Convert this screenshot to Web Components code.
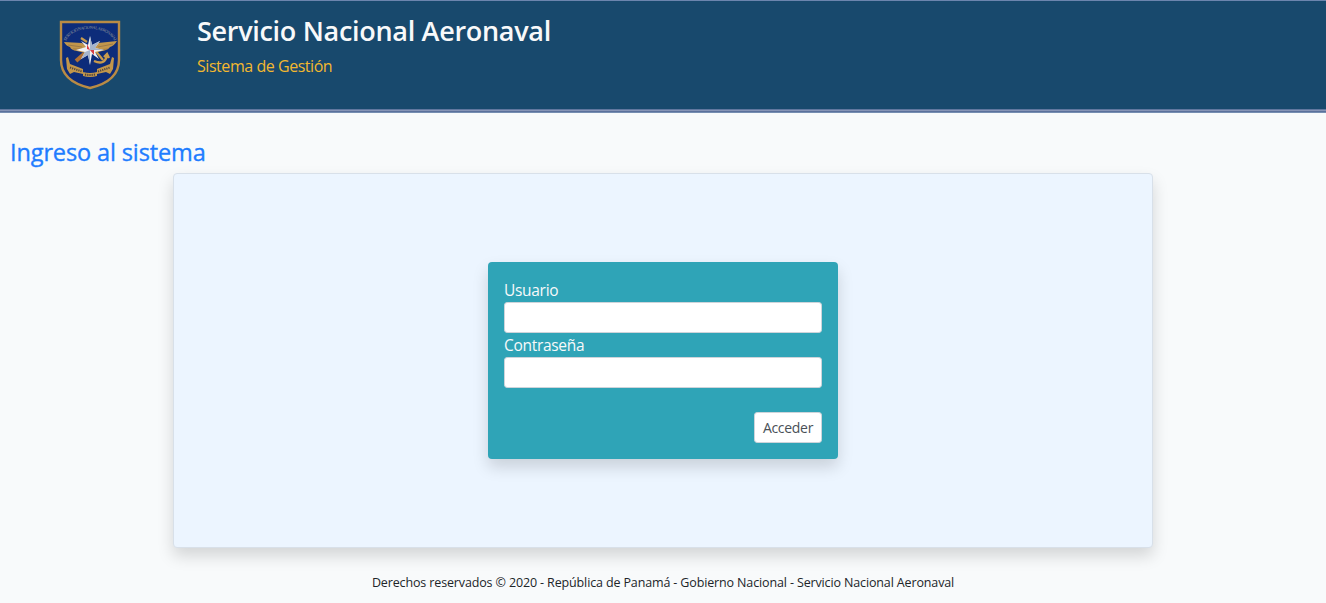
<!DOCTYPE html>
<html lang="es">
<head>
<meta charset="utf-8">
<title>Servicio Nacional Aeronaval</title>
<style>
html,body{margin:0;height:100%;overflow:hidden}
body{background:#f8fafb;font-family:"Open Sans","Noto Sans",sans-serif;color:#212529}
</style>
</head>
<body>
<sena-app></sena-app>
<script>
const define = (name, html) => customElements.define(name, class extends HTMLElement {
  constructor() {
    super();
    this.attachShadow({ mode: 'open' }).innerHTML = html;
  }
});

define('sena-crest', `
<style>:host{display:block;width:62px;height:71px}svg{display:block}</style>
<svg width="62" height="71" viewBox="0 0 62 71" role="img" aria-label="Escudo">
  <defs><path id="arc" d="M7 22C13 6 48 5 56 23"/></defs>
  <path d="M2 3H60V41C60 57 48 65 31 69C14 65 2 57 2 41Z" fill="#0d2c7a" stroke="#b98b45" stroke-width="2.4"/>
  <text font-family="Liberation Serif, serif" font-size="4.2" fill="#969b9c"><textPath href="#arc" textLength="58">SERVICIO NACIONAL AERONAVAL</textPath></text>
  <path d="M5 23L23 24L31 29L39 24L58 22Q55 27 51 28Q49 31 43 32L36 34L31 32L26 34L18 32Q12 31 11 28Q7 27 5 23Z" fill="#c2964b"/>
  <path d="M9 26L23 28M14 30L25 30M54 25L39 28M49 30L37 31" stroke="#856846" stroke-width=".6"/>
  <path d="M22 19L28 23M35 30L44 41M28 32L20 40" stroke="#c99b4c" stroke-width="2.2"/>
  <path d="M17 42L25 35" stroke="#b07034" stroke-width="4"/>
  <path d="M35 42Q46 47 48 36M45 38L48 35L50 39" fill="none" stroke="#c99b4c" stroke-width="2.4"/>
  <path d="M31 17L33 26L41 22L36 29L45 31L36 33L40 40L33 35L31 46L29 36L22 40L26 33L17 31L27 28L22 22L29 26Z" fill="#f0f1f5"/>
  <path d="M31 17V31H45L36 29L41 22L33 26ZM31 31V46L29 36L22 40L26 33Z" fill="#a6b5cc"/>
  <path d="M31 31L28 25V30ZM31 31L35 36V31Z" fill="#d83f46"/>
  <path d="M7 39L9 38L11 45L24 50V55L15 53L11 55L8 50ZM55 39L53 38L51 45L38 50V55L47 53L51 55L54 50ZM24 53Q31 55 38 53V57Q31 59 24 57Z" fill="#c2964b"/>
  <path d="M11 48.5L23 52.5M26 55.5Q31 56.5 36 55.5M39 52.5L51 48.5" fill="none" stroke="#4d4542" stroke-width="2" stroke-dasharray="1.2 1"/>
</svg>`);

define('sena-header', `
<style>
:host{display:flex;align-items:flex-start;box-sizing:border-box;height:113px;background:linear-gradient(#6c85ae 0 1px,#18496d 1px 109px,#60779f 109px 110px,#8694b6 110px 111px,#5b719b 111px 112px,#768db1 112px 113px);padding:19px 0 0 59px}
.text{margin-left:76px;margin-top:-5px}
::slotted([slot=title]){display:block;font-size:27px;line-height:34px;font-weight:600;color:#f8f9fa;white-space:nowrap;letter-spacing:-.3px}
::slotted([slot=subtitle]){display:block;margin-top:6px;font-size:16px;line-height:24px;color:#f3b82f;white-space:nowrap;letter-spacing:-.45px}
</style>
<sena-crest></sena-crest><div class="text"><slot name="title"></slot><slot name="subtitle"></slot></div>`);

define('sena-card', `
<style>
:host{display:flex;box-sizing:border-box;width:980px;height:375px;margin:0 auto;border:1px solid #d8e0e9;border-radius:4px;background:#ecf5ff;box-shadow:0 8px 16px rgba(0,0,0,.15);align-items:center;justify-content:center}
</style><slot></slot>`);

define('sena-field', `
<style>
:host{display:block;height:55px}
label{display:block;font-size:15.5px;line-height:24px;color:#f8f9fa;letter-spacing:-.3px}
input{display:block;box-sizing:border-box;width:100%;height:31px;border:1px solid #ced4da;border-radius:3.2px;background:#fff;padding:4px 8px;outline:0}
</style><label><slot></slot></label><input>`);

define('sena-login', `
<style>
:host{display:block;box-sizing:border-box;width:350px;height:197px;padding:16px;border-radius:4px;background:#2fa4b7;box-shadow:0 8px 16px rgba(0,0,0,.15)}
.actions{display:flex;justify-content:flex-end;margin-top:24px}
button{box-sizing:border-box;width:68px;height:31px;padding:0;border:1px solid #ced4da;border-radius:3.2px;background:#fff;color:#495057;font:14px/21px "Open Sans","Noto Sans",sans-serif;letter-spacing:-.3px}
</style>
<sena-field>Usuario</sena-field><sena-field>Contraseña</sena-field>
<div class="actions"><button type="button">Acceder</button></div>`);

define('sena-app', `
<style>
:host{display:block}
h2{margin:25px 0 7px 10px;font-size:23.5px;line-height:28px;font-weight:500;color:#207cff;letter-spacing:-.12px;-webkit-text-stroke:.35px #207cff}
footer{margin-top:25px;text-align:center;font-size:12.5px;line-height:20px;letter-spacing:-.135px;white-space:nowrap}
</style>
<sena-header><span slot="title">Servicio Nacional Aeronaval</span><span slot="subtitle">Sistema de Gestión</span></sena-header>
<h2>Ingreso al sistema</h2>
<sena-card><sena-login></sena-login></sena-card>
<footer>Derechos reservados © 2020 - República de Panamá - Gobierno Nacional - Servicio Nacional Aeronaval</footer>`);
</script>
</body>
</html>
